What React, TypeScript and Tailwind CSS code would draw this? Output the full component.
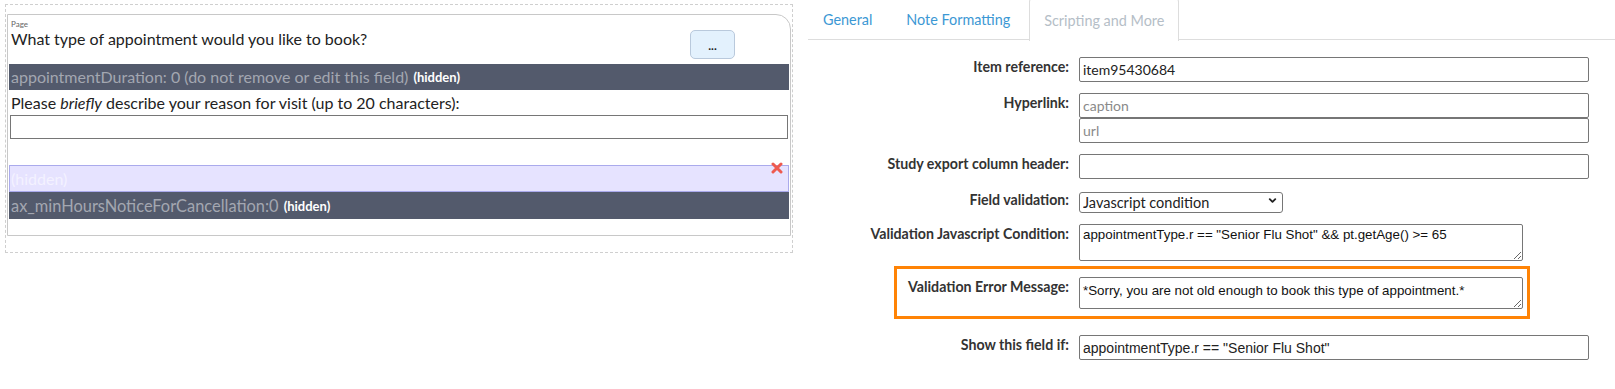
import { ChevronDown } from "lucide-react";

const lato = "font-['Lato','Noto_Sans',sans-serif]";
const arial = "font-['Liberation_Sans',Arial,sans-serif]";

function Label({ children, w = "w-[261px]" }: { children: React.ReactNode; w?: string }) {
  return (
    <div className={`${w} shrink-0 text-right text-[14.2px] font-bold leading-[20px] text-[#333]`}>
      {children}
    </div>
  );
}

const inputCls = `h-[25px] w-[510px] rounded-[2px] border border-[#767676] bg-white px-[3px] text-[14px] text-[#222] ${lato} outline-none`;
const areaCls = `w-[444px] rounded-[2px] border border-[#767676] bg-white px-[3px] py-[2px] text-[13.33px] leading-[15px] text-[#111] ${arial} outline-none`;

function PagePreview() {
  return (
    <div className="w-[793px] shrink-0 pl-[5px] pt-[4px]">
      <div className="h-[249px] border border-dashed border-[#cfcfcf] pl-[1px] pr-[1px] pt-[9px]">
        <div className="h-[222px] rounded-tr-[15px] border border-[#c8c8c8] px-[1px] pt-[4px]">
          <div className="pl-[2px] text-[8px] leading-[10px] text-[#666]">Page</div>
          <div className="flex h-[35px] items-start justify-between">
            <div className="pl-[2px] text-[16px] leading-[20px] text-[#222]">
              What type of appointment would you like to book?
            </div>
            <button className="mr-[54px] mt-[1px] flex h-[29px] w-[45px] items-center justify-center rounded-[5px] border border-[#b9c9dc] bg-[#e3f1fd] pt-[3px] text-[12px] font-bold leading-none text-[#222]">
              ...
            </button>
          </div>
          <div className="flex h-[26px] items-center bg-[#535a6c] pl-[2px] text-[16px] leading-[20px] text-[#a3a7b1]">
            appointmentDuration: 0 (do not remove or edit this field)
            <span className="ml-[5px] text-[13px] font-bold text-white">(hidden)</span>
          </div>
          <div className="pl-[2px] pt-[3px] text-[16px] leading-[20px] text-[#222]">
            Please <i>briefly</i> describe your reason for visit (up to 20 characters):
          </div>
          <div className="mx-[1px] mt-[2px] h-[24px] border border-[#767676] bg-white" />
          <div className="relative mt-[26px] flex h-[27px] items-center border border-[#aaaaec] bg-[#e6e3ff] pl-[1px] text-[16px] leading-[20px] text-[#f4f2ff]">
            (hidden)
            <svg className="absolute right-[5px] top-[-4px]" width="12" height="12" viewBox="0 0 12 12">
              <path d="M2 2 L10 10 M10 2 L2 10" stroke="#ee5a4f" strokeWidth="3" strokeLinecap="round" />
            </svg>
          </div>
          <div className="flex h-[27px] items-center bg-[#535a6c] pl-[2px] text-[16.4px] leading-[20px] text-[#a3a7b1]">
            ax_minHoursNoticeForCancellation:0
            <span className="ml-[5px] text-[13px] font-bold text-white">(hidden)</span>
          </div>
        </div>
      </div>
    </div>
  );
}

function Tabs() {
  const tab = "flex h-[40px] items-center px-[14px] text-[14.4px] leading-[20px]";
  return (
    <div className="flex h-[40px] border-b border-[#dddddd]">
      <div className={`${tab} mr-[4px] border border-transparent text-[#3c98d4]`}>General</div>
      <div className={`${tab} mr-[4px] border border-transparent text-[#3c98d4]`}>Note Formatting</div>
      <div className={`${tab} -mt-[2px] h-[43px] rounded-t-[4px] border-x border-t border-[#dddddd] bg-white pt-[2px] text-[#b5bec7]`}>
        Scripting and More
      </div>
    </div>
  );
}

function Settings() {
  return (
    <div className={`ml-[15px] w-[807px] ${lato}`}>
      <Tabs />
      <div className="mt-[17px] flex flex-col">
        <div className="flex gap-[10px]">
          <Label>Item reference:</Label>
          <input className={inputCls} defaultValue="item95430684" />
        </div>
        <div className="mt-[11px] flex gap-[10px]">
          <Label>Hyperlink:</Label>
          <div className="flex flex-col">
            <input className={`${inputCls} placeholder:text-[#8a8a8a]`} placeholder="caption" />
            <input className={`${inputCls} placeholder:text-[#8a8a8a]`} placeholder="url" />
          </div>
        </div>
        <div className="mt-[11px] flex gap-[10px]">
          <Label>Study export column header:</Label>
          <input className={inputCls} />
        </div>
        <div className="mt-[11px] flex gap-[10px]">
          <Label>Field validation:</Label>
          <div className="relative">
            <select className={`h-[21px] w-[204px] appearance-none rounded-[3px] border border-[#767676] bg-white pl-[3px] text-[14.5px] leading-[17px] text-[#222] ${lato} outline-none`}>
              <option>Javascript condition</option>
            </select>
            <ChevronDown className="pointer-events-none absolute right-[5px] top-[5px] h-[11px] w-[11px] text-[#222]" strokeWidth={4} />
          </div>
        </div>
        <div className="mt-[10px] flex gap-[10px]">
          <Label>Validation Javascript Condition:</Label>
          <textarea
            className={`${areaCls} h-[37px]`}
            defaultValue={'appointmentType.r == "Senior Flu Shot" && pt.getAge() >= 65'}
          />
        </div>
        <div className="ml-[86px] mt-[5px] w-[636px] border-[3px] border-[#ff8305] pb-[7px] pt-[8px]">
          <div className="flex gap-[10px]">
            <Label w="w-[172px]">Validation Error Message:</Label>
            <textarea
              className={`${areaCls} h-[32px] pt-[5px]`}
              defaultValue="*Sorry, you are not old enough to book this type of appointment.*"
            />
          </div>
        </div>
        <div className="mt-[16px] flex gap-[10px]">
          <Label>Show this field if:</Label>
          <input className={`${inputCls} text-[13.33px] ${arial}`} defaultValue={'appointmentType.r == "Senior Flu Shot"'} />
        </div>
      </div>
    </div>
  );
}

export default function App() {
  return (
    <div className={`flex h-[389px] w-[1615px] overflow-hidden bg-white ${lato}`}>
      <PagePreview />
      <Settings />
    </div>
  );
}
